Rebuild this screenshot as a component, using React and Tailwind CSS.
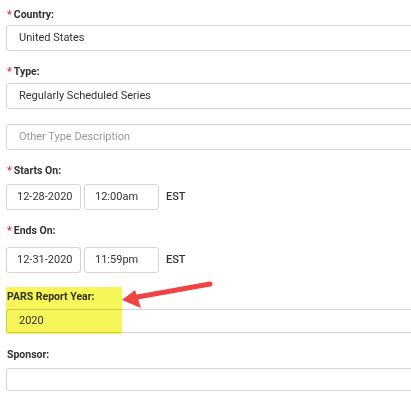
import React from "react";

const font = { fontFamily: "Roboto, 'Liberation Sans', sans-serif" };

function Label({ children, required }) {
  return (
    <div className="h-4 leading-4 text-[10.5px] font-bold text-[#333]">
      {required && <span className="text-[#d9362b] mr-[2px]">*</span>}
      {children}
    </div>
  );
}

function TextInput({ value, placeholder, className = "" }) {
  return (
    <div
      className={
        "h-[26px] w-[430px] rounded-[3px] border border-[#d4d4d4] flex items-center pl-3 text-[11px] " +
        className
      }
    >
      {value ? (
        <span className="text-[#333]">{value}</span>
      ) : (
        <span className="text-[#999]">{placeholder}</span>
      )}
    </div>
  );
}

function SmallInput({ value }) {
  return (
    <div className="h-[26px] w-[75px] rounded-[3px] border border-[#d4d4d4] flex items-center pl-[10px] text-[11px] text-[#333]">
      {value}
    </div>
  );
}

export default function App() {
  return (
    <div
      className="relative w-[411px] h-[394px] overflow-hidden bg-white pl-[6px] pt-[7px]"
      style={font}
    >
      <div className="pl-[1px]">
        <Label required>Country:</Label>
      </div>
      <div className="mt-[2px]">
        <TextInput value="United States" />
      </div>

      <div className="mt-[13px] pl-[1px]">
        <Label required>Type:</Label>
      </div>
      <div className="mt-[3px]">
        <TextInput value="Regularly Scheduled Series" />
      </div>

      <div className="mt-[15px]">
        <TextInput placeholder="Other Type Description" />
      </div>

      <div className="mt-[13px] pl-[1px]">
        <Label required>Starts On:</Label>
      </div>
      <div className="mt-[5px] flex items-center gap-[3px]">
        <SmallInput value="12-28-2020" />
        <SmallInput value="12:00am" />
        <span className="ml-[4px] text-[11px] font-medium text-[#333]">EST</span>
      </div>

      <div className="mt-[13px] pl-[1px]">
        <Label required>Ends On:</Label>
      </div>
      <div className="mt-[8px] flex items-center gap-[3px]">
        <SmallInput value="12-31-2020" />
        <SmallInput value="11:59pm" />
        <span className="ml-[4px] text-[11px] font-medium text-[#333]">EST</span>
      </div>

      <div className="mt-[16px] pl-[1px]">
        <Label>PARS Report Year:</Label>
      </div>
      <div className="mt-[4px]">
        <TextInput value="2020" className="!h-[24px]" />
      </div>

      <div className="mt-[14px] pl-[1px]">
        <Label>Sponsor:</Label>
      </div>
      <div className="mt-[5px]">
        <TextInput className="!h-[23px]" />
      </div>

      {/* highlight */}
      <div className="absolute left-[6px] top-[287px] w-[116px] h-[47px] bg-[#f6f55a] mix-blend-multiply pointer-events-none" />

      {/* arrow */}
      <svg
        className="absolute left-0 top-0 pointer-events-none"
        width="411"
        height="394"
        viewBox="0 0 411 394"
      >
        <line
          x1="210"
          y1="284"
          x2="132"
          y2="298"
          stroke="#f04444"
          strokeWidth="5"
          strokeLinecap="round"
        />
        <polygon points="122,300 135,290 141,308" fill="#f04444" />
      </svg>
    </div>
  );
}
